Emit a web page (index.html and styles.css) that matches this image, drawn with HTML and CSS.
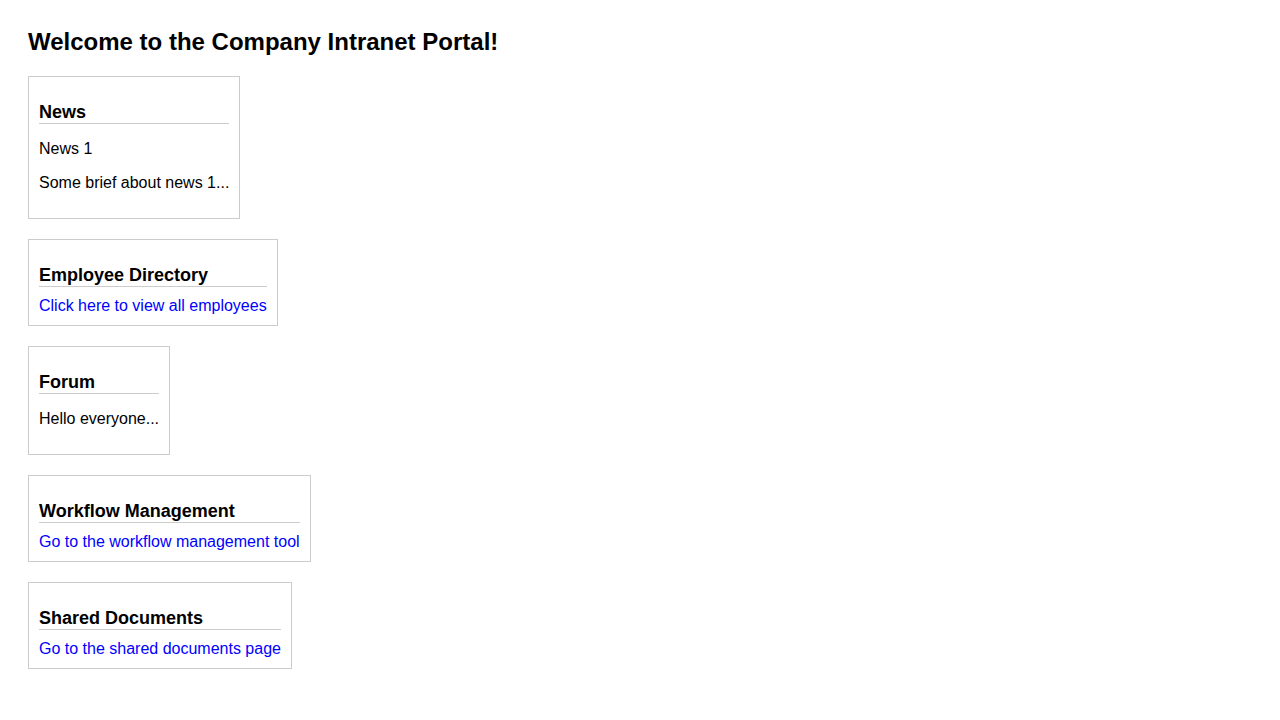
FILE: index.html
```html
<!DOCTYPE html>
<html lang="en">
<head>
<meta charset="utf-8">
<title>Company Intranet Portal</title>
<link rel="stylesheet" href="styles.css">
</head>
<body>
<h1 class="title">Welcome to the Company Intranet Portal!</h1>
<div class="sections">
  <section class="card">
    <h2 class="card-title">News</h2>
    <p class="card-text">News 1</p>
    <p class="card-text">Some brief about news 1...</p>
  </section>
  <section class="card">
    <h2 class="card-title">Employee Directory</h2>
    <a class="card-link" href="#">Click here to view all employees</a>
  </section>
  <section class="card">
    <h2 class="card-title">Forum</h2>
    <p class="card-text">Hello everyone...</p>
  </section>
  <section class="card">
    <h2 class="card-title">Workflow Management</h2>
    <a class="card-link" href="#">Go to the workflow management tool</a>
  </section>
  <section class="card">
    <h2 class="card-title">Shared Documents</h2>
    <a class="card-link" href="#">Go to the shared documents page</a>
  </section>
</div>
</body>
</html>
```
FILE: styles.css
```css
html, body {
  margin: 0;
  padding: 0;
  background: #fff;
}
body {
  padding: 28px;
  font-family: "Liberation Sans", Arial, sans-serif;
  font-size: 16px;
  color: #000;
}
.title {
  font-size: 24px;
  font-weight: bold;
  margin: 0 0 20px 0;
  line-height: 28px;
}
.sections {
  display: flex;
  flex-direction: column;
  align-items: flex-start;
  gap: 20px;
}
.card {
  border: 1px solid #ccc;
  padding: 10px;
}
.card-title {
  font-size: 18px;
  font-weight: bold;
  margin: 15px 0 10px 0;
  line-height: 21px;
  border-bottom: 1px solid #ccc;
}
.card-text {
  margin: 16px 0;
  line-height: 18px;
}
.card-link {
  display: block;
  color: #0000ee;
  color: blue;
  text-decoration: none;
  line-height: 18px;
}
```
